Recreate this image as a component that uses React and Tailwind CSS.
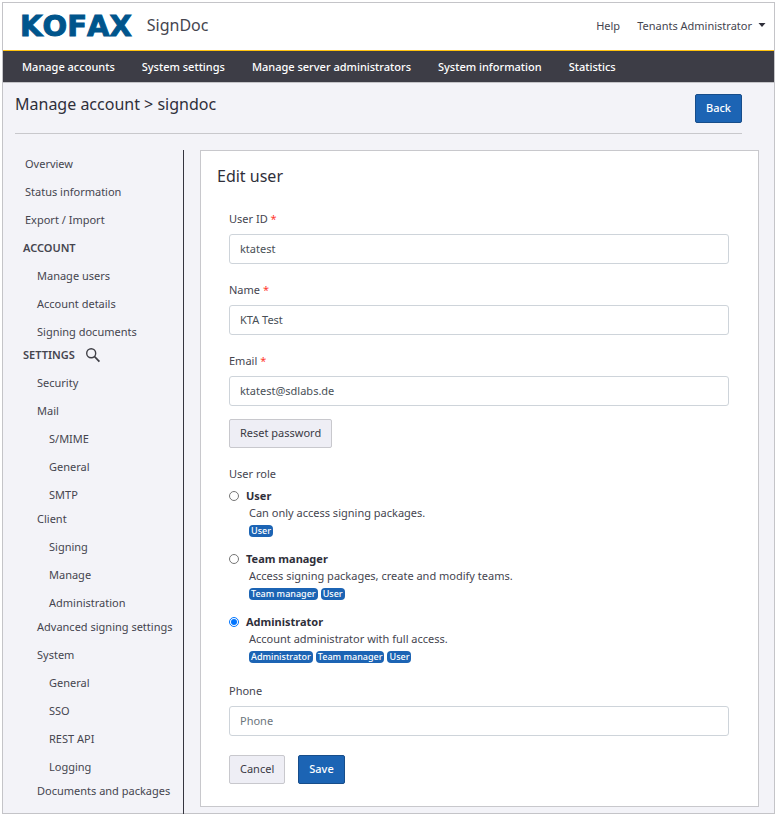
import { useState } from "react";

const NAV = [
  "Manage accounts",
  "System settings",
  "Manage server administrators",
  "System information",
  "Statistics",
];

const ROLES = [
  {
    id: "user",
    name: "User",
    text: "Can only access signing packages.",
    badges: ["User"],
  },
  {
    id: "team",
    name: "Team manager",
    text: "Access signing packages, create and modify teams.",
    badges: ["Team manager", "User"],
  },
  {
    id: "admin",
    name: "Administrator",
    text: "Account administrator with full access.",
    badges: ["Administrator", "Team manager", "User"],
  },
];

function SearchIcon() {
  return (
    <svg viewBox="0 0 16 16" className="size-4" fill="none" stroke="#3f3f46">
      <circle cx="6.2" cy="6.2" r="4.5" strokeWidth="1.4" />
      <path d="M9.5 9.5L14.4 14.6" strokeWidth="1.8" />
    </svg>
  );
}

function NavItem({ label, children }) {
  return (
    <li>
      <a href="#" className="block whitespace-nowrap hover:underline">
        {label}
      </a>
      {children && <ul className="-mb-1 pl-3">{children}</ul>}
    </li>
  );
}

function Sidebar() {
  return (
    <nav className="-mb-px w-[169px] shrink-0 border-r border-[#35353f] pl-2 text-[11px] leading-7">
      <ul className="pl-[2px]">
        <NavItem label="Overview" />
        <NavItem label="Status information" />
        <NavItem label="Export / Import" />
      </ul>

      <h2 className="font-semibold">ACCOUNT</h2>
      <ul className="-mb-[5px] pl-[14px]">
        <NavItem label="Manage users" />
        <NavItem label="Account details" />
        <NavItem label="Signing documents" />
      </ul>

      <div className="flex items-center gap-[10px]">
        <h2 className="font-semibold">SETTINGS</h2>
        <button type="button" aria-label="Search settings">
          <SearchIcon />
        </button>
      </div>
      <ul className="pl-[14px]">
        <NavItem label="Security" />
        <NavItem label="Mail">
          <NavItem label="S/MIME" />
          <NavItem label="General" />
          <NavItem label="SMTP" />
        </NavItem>
        <NavItem label="Client">
          <NavItem label="Signing" />
          <NavItem label="Manage" />
          <NavItem label="Administration" />
        </NavItem>
        <NavItem label="Advanced signing settings" />
        <NavItem label="System">
          <NavItem label="General" />
          <NavItem label="SSO" />
          <NavItem label="REST API" />
          <NavItem label="Logging" />
        </NavItem>
        <NavItem label="Documents and packages" />
      </ul>
    </nav>
  );
}

function Field({ id, label, required, ...props }) {
  return (
    <div>
      <label htmlFor={id} className="block leading-4">
        {label} {required && <span className="text-[#ff3b30]">*</span>}
      </label>
      <input
        id={id}
        className="mt-[7px] block h-[30px] w-full rounded-[3px] border border-[#ced4da] bg-white px-[10px] pb-px text-[#495057] placeholder:text-[#6c757d]"
        {...props}
      />
    </div>
  );
}

function Button({ primary, type = "button", children }) {
  return (
    <button
      type={type}
      className={
        primary
          ? "h-[29px] rounded-[2px] border border-[#174d8a] bg-[#1c64b4] px-[10px] text-[11px] font-medium text-white"
          : "h-[29px] rounded-[2px] border border-[#c8c8cd] bg-[#eeeef5] px-[10px] text-[11px] text-[#3a3a44]"
      }
    >
      {children}
    </button>
  );
}

function Role({ role, checked, onChange }) {
  return (
    <div>
      <label className="flex items-center gap-[7px] text-[11px] leading-[18px] font-bold text-[#2f2f3a]">
        <input
          type="radio"
          name="role"
          className="m-0 size-[10px]"
          checked={checked}
          onChange={() => onChange(role.id)}
        />
        {role.name}
      </label>
      <div className="pl-5">
        <p className="leading-4">{role.text}</p>
        <div className="mt-1 flex gap-[3px]">
          {role.badges.map((badge) => (
            <span
              key={badge}
              className="rounded-[4px] bg-[#1c64b4] px-[2px] text-[9px] leading-3 font-medium text-white"
            >
              {badge}
            </span>
          ))}
        </div>
      </div>
    </div>
  );
}

function EditUser() {
  const [role, setRole] = useState("admin");

  return (
    <section className="mb-[6px] ml-4 min-w-0 flex-1 border border-[#c8c8cc] bg-white pt-[13px] pr-[29px] pb-[22px] pl-4">
      <h2 className="text-[16px] leading-6 text-[#2f2f3a]">Edit user</h2>

      <form className="mt-[23px] ml-3 text-[11px]">
        <div className="flex flex-col gap-[18px]">
          <Field id="userid" label="User ID" required defaultValue="ktatest" />
          <Field id="name" label="Name" required defaultValue="KTA Test" />
          <Field
            id="email"
            label="Email"
            type="email"
            required
            defaultValue="ktatest@sdlabs.de"
          />
        </div>

        <div className="mt-[13px]">
          <Button>Reset password</Button>
        </div>

        <fieldset className="mt-[18px]">
          <legend className="leading-4">User role</legend>
          <div className="mt-[5px] flex flex-col gap-[13px]">
            {ROLES.map((r) => (
              <Role
                key={r.id}
                role={r}
                checked={role === r.id}
                onChange={setRole}
              />
            ))}
          </div>
        </fieldset>

        <div className="mt-5">
          <Field id="phone" label="Phone" type="tel" placeholder="Phone" />
        </div>

        <div className="mt-[19px] flex gap-[13px]">
          <Button>Cancel</Button>
          <Button primary>Save</Button>
        </div>
      </form>
    </section>
  );
}

export default function App() {
  return (
    <div className="bg-white p-[2px] font-['Noto_Sans',sans-serif] text-[#45454f]">
      <div className="border border-[#c4c4c8] bg-[#f3f3f8]">
        <header className="flex h-[47px] items-center bg-white pr-2 pl-[17px]">
          <span className="pb-px font-['DejaVu_Sans',sans-serif] text-[29px] leading-none font-bold text-[#00558c] [font-kerning:none] [-webkit-text-stroke:1px_#00558c]">
            KOFAX
          </span>
          <span className="ml-[15px] pb-1 text-[16px]">SignDoc</span>
          <div className="ml-auto flex items-center gap-[17px] text-[11px]">
            <a href="#" className="pb-px">
              Help
            </a>
            <button type="button" className="flex items-center gap-[6px]">
              Tenants Administrator
              <svg viewBox="0 0 8 4" className="mb-1 h-1 w-2" fill="#2f2f3a">
                <path d="M0.5 0H7.5L4 4Z" />
              </svg>
            </button>
          </div>
        </header>

        <nav className="flex h-[33px] items-center gap-[27px] border-t border-b border-t-[#ffc20e] border-b-[#c4c4c8] bg-[#3d3d46] pt-px pl-[19px] text-[11px] font-medium text-white">
          {NAV.map((item) => (
            <a key={item} href="#" className="whitespace-nowrap">
              {item}
            </a>
          ))}
        </nav>

        <main className="pl-3">
          <div className="mr-8 flex items-start justify-between border-b border-[#c8c8cc] pt-[11px] pb-[10px]">
            <h1 className="-mt-[2px] text-[16px] leading-6 text-[#2f2f3a]">
              Manage account &gt; signdoc
            </h1>
            <Button primary>Back</Button>
          </div>
          <div className="mt-4 mr-[15px] flex">
            <Sidebar />
            <EditUser />
          </div>
        </main>
      </div>
    </div>
  );
}
